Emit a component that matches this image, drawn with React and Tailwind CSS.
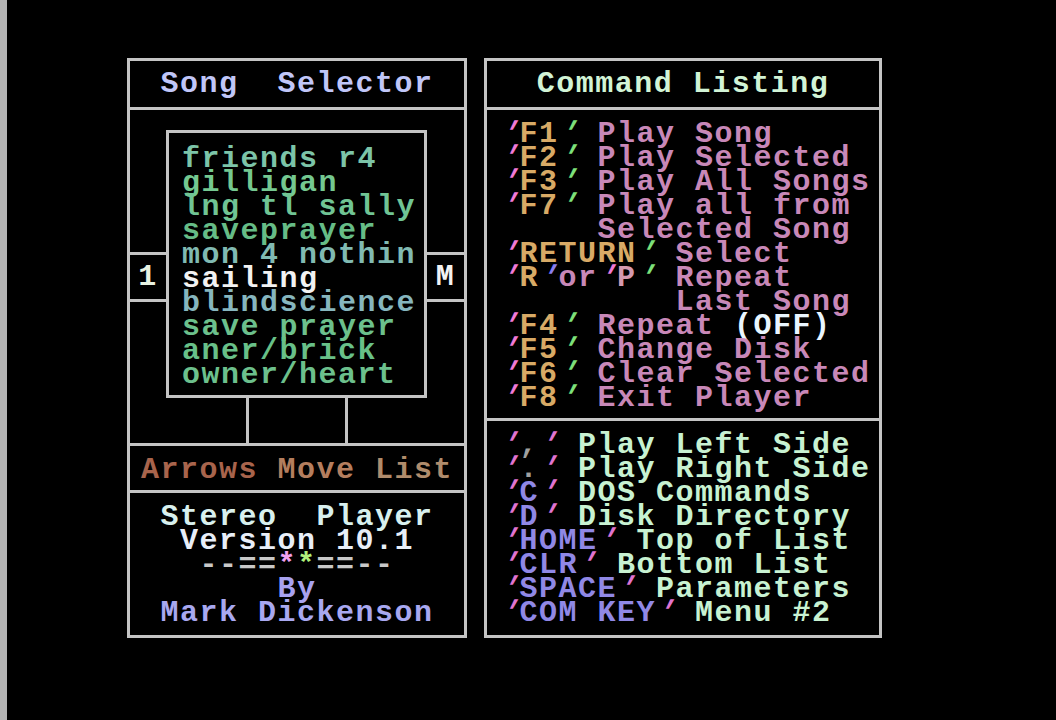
import React from 'react';

// C64-style text: monospace stretched to a 19.5px x 24px cell
const mono = "font-['Liberation_Mono',monospace] font-bold text-[30px] leading-[24px] tracking-[1.5px] whitespace-pre";
const edge = 'border-[#c4c4c4]';

const Q1 = 'text-[#f07ad6]';
const Q2 = 'text-[#7ee07a]';
const KEY = 'text-[#d8aa66]';
const DESC = 'text-[#c888b8]';
const BQ = 'text-[#e074d0]';
const BKEY = 'text-[#9088e6]';
const BDESC = 'text-[#c8f2d2]';

const songs = [
  ['friends r4', 'text-[#7cc4a8]'],
  ['gilligan', 'text-[#74c890]'],
  ['lng tl sally', 'text-[#70c494]'],
  ['saveprayer', 'text-[#66bc86]'],
  ['mon 4 nothin', 'text-[#80bab2]'],
  ['sailing', 'text-[#f2f2f2]'],
  ['blindscience', 'text-[#86b6be]'],
  ['save prayer', 'text-[#6cc08c]'],
  ['aner/brick', 'text-[#68c088]'],
  ['owner/heart', 'text-[#6cc08c]'],
];

// the quote mark is a tick leaning right, as in the C64 charset
const TICK = 'tick';

const cmd = (k, d) => [[TICK, Q1], [k, KEY], [TICK, Q2], [' ' + d, DESC]];

const commands = [
  cmd('F1', 'Play Song'),
  cmd('F2', 'Play Selected'),
  cmd('F3', 'Play All Songs'),
  cmd('F7', 'Play all from'),
  [['     Selected Song', DESC]],
  cmd('RETURN', 'Select'),
  [[TICK, Q1], ['R', KEY], [TICK, 'text-[#8a7ef0]'], ['or', DESC], [TICK, Q1], ['P', 'text-[#d49ab0]'], [TICK, Q2], [' Repeat', DESC]],
  [['         Last Song', DESC]],
  [...cmd('F4', 'Repeat '), ['(OFF)', 'text-[#eaf6ff]']],
  cmd('F5', 'Change Disk'),
  cmd('F6', 'Clear Selected'),
  cmd('F8', 'Exit Player'),
];

const bcmd = (k, d, kc = BKEY) => [[TICK, BQ], [k, kc], [TICK, BQ], [' ' + d, BDESC]];

const extras = [
  bcmd(',', 'Play Left Side', 'text-[#a0a0a0]'),
  bcmd('.', 'Play Right Side', 'text-[#a0a0a0]'),
  bcmd('C', 'DOS Commands'),
  bcmd('D', 'Disk Directory'),
  bcmd('HOME', 'Top of List'),
  bcmd('CLR', 'Bottom List'),
  bcmd('SPACE', 'Parameters'),
  bcmd('COM KEY', 'Menu #2'),
];

const Line = ({ segs }) => (
  <div className={mono}>
    {segs.map(([t, c], i) =>
      t === TICK ? (
        <span key={i} className={`inline-block -skew-x-[28deg] ${c}`}>'</span>
      ) : (
        <span key={i} className={c}>{t}</span>
      )
    )}
  </div>
);

const App = () => {
  return (
    <div className="w-[1056px] h-[720px] bg-black flex overflow-hidden">
      <div className="w-[7px] h-full bg-[#b4b4b4]" />

      <div className="flex gap-[17px] pl-[120px] pt-[58px]">
        {/* Left panel */}
        <div className={`w-[340px] h-[580px] border-[3px] ${edge} flex flex-col`}>
          <div className={`h-[49px] border-b-[3px] ${edge} pt-[11px] text-center`}>
            <div className={`${mono} text-[#c0c6f8]`}>Song  Selector</div>
          </div>

          <div className={`h-[336px] border-b-[3px] ${edge} flex`}>
            <div className="w-[36px] flex flex-col justify-center">
              <div className={`h-[50px] border-y-[3px] ${edge} flex items-center justify-center`}>
                <span className={`${mono} text-[#e8f2e2]`}>1</span>
              </div>
            </div>

            <div className="w-[261px] flex flex-col pt-[20px]">
              <div className={`h-[268px] border-[3px] ${edge} pl-[13px] pt-[14px]`}>
                {songs.map(([s, c]) => (
                  <div key={s} className={`${mono} ${c}`}>{s}</div>
                ))}
              </div>
              <div className={`flex-1 ml-[80px] w-[102px] border-x-[3px] ${edge}`} />
            </div>

            <div className="flex-1 flex flex-col justify-center">
              <div className={`h-[50px] border-y-[3px] ${edge} flex items-center justify-center`}>
                <span className={`${mono} text-[#f2f2f2]`}>M</span>
              </div>
            </div>
          </div>

          <div className={`h-[47px] border-b-[3px] ${edge} pt-[12px] text-center`}>
            <div className={mono}>
              <span className="text-[#a8644c]">Arrows </span>
              <span className="text-[#b47e5e]">Move </span>
              <span className="text-[#b08c6c]">List</span>
            </div>
          </div>

          <div className="flex-1 pt-[12px] text-center">
            <div className={`${mono} text-[#d8f0ee]`}>Stereo  Player</div>
            <div className={`${mono} text-[#e8eef8]`}>Version 10.1</div>
            <div className={mono}>
              <span className="text-[#c8c8c8]">--==</span>
              <span className="text-[#f0a0f0]">*</span>
              <span className="text-[#b0f07c]">*</span>
              <span className="text-[#c8c8c8]">==--</span>
            </div>
            <div className={`${mono} text-[#a8a2f0]`}>By</div>
            <div className={`${mono} text-[#a8a8f0]`}>Mark Dickenson</div>
          </div>
        </div>

        {/* Right panel */}
        <div className={`w-[398px] h-[580px] border-[3px] ${edge} flex flex-col`}>
          <div className={`h-[49px] border-b-[3px] ${edge} pt-[11px] text-center`}>
            <div className={`${mono} text-[#d2f4d6]`}>Command Listing</div>
          </div>

          <div className={`h-[311px] border-b-[3px] ${edge} pt-[12px] pl-[13px]`}>
            {commands.map((segs, i) => (
              <Line key={i} segs={segs} />
            ))}
          </div>

          <div className="flex-1 pt-[12px] pl-[13px]">
            {extras.map((segs, i) => (
              <Line key={i} segs={segs} />
            ))}
          </div>
        </div>
      </div>
    </div>
  );
};

export default App;
